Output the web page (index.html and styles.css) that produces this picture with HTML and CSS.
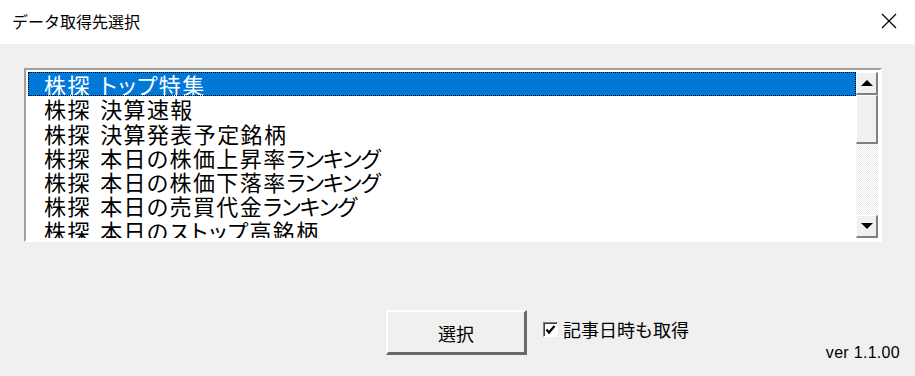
FILE: index.html
```html
<!DOCTYPE html>
<html lang="ja">
<head>
<meta charset="utf-8">
<title>データ取得先選択</title>
<link rel="stylesheet" href="styles.css">
</head>
<body>
<div class="window">
  <div class="titlebar">
    <span class="title">データ取得先選択</span>
    <svg class="close" width="16" height="16" viewBox="0 0 16 16"><path d="M1 1 L15 15 M15 1 L1 15" stroke="#000" stroke-width="1.2" fill="none"/></svg>
  </div>
  <div class="content">
    <div class="listbox">
      <ul class="items">
        <li class="item selected">株探 トップ特集</li>
        <li class="item">株探 決算速報</li>
        <li class="item">株探 決算発表予定銘柄</li>
        <li class="item">株探 本日の株価上昇率<span class="kana">ランキング</span></li>
        <li class="item">株探 本日の株価下落率<span class="kana">ランキング</span></li>
        <li class="item">株探 本日の売買代金<span class="kana">ランキング</span></li>
        <li class="item">株探 本日のストップ高銘柄</li>
      </ul>
      <div class="scrollbar">
        <div class="sbtn"><span class="tri up"></span></div>
        <div class="thumb"></div>
        <div class="track"></div>
        <div class="sbtn"><span class="tri down"></span></div>
      </div>
    </div>
    <div class="actions">
      <button class="btn">選択</button>
      <label class="check"><span class="box"><svg width="11" height="11" viewBox="0 0 11 11"><path d="M1.5 5.5 L4 8.5 L9.5 2" stroke="#000" stroke-width="2.2" fill="none"/></svg></span>記事日時も取得</label>
      <span class="ver">ver 1.1.00</span>
    </div>
  </div>
</div>
</body>
</html>
```
FILE: styles.css
```css
html, body {
  margin: 0;
  padding: 0;
  background: #f0f0f0;
}
.window {
  width: 915px;
  height: 376px;
  overflow: hidden;
  font-family: "Noto Sans CJK JP", "Noto Sans", sans-serif;
}
.titlebar {
  height: 44px;
  background: #fff;
  display: flex;
  align-items: center;
  justify-content: space-between;
  padding: 0 18px 0 12px;
  box-sizing: border-box;
}
.title {
  font-size: 16px;
  color: #000;
  margin-top: -2px;
}
.close {
  margin-top: -3px;
}
.content {
  padding: 24px 0 0 24px;
}
.listbox {
  width: 858px;
  height: 174px;
  box-sizing: border-box;
  border: 2px solid;
  border-color: #a0a0a0 #fff #fff #a0a0a0;
  background: #fff;
  padding: 2px;
  display: flex;
  overflow: hidden;
}
.items {
  list-style: none;
  margin: 0;
  padding: 0;
  flex: 1;
  overflow: hidden;
}
.item {
  height: 24.3px;
  line-height: 24px;
  padding-left: 16px;
  font-size: 22px;
  letter-spacing: 1.4px;
  word-spacing: 3px;
  font-feature-settings: "palt" 1;
  color: #000;
  white-space: nowrap;
  box-sizing: border-box;
}
.kana {
  letter-spacing: -1px;
}
.item.selected {
  background: #0078d7;
  color: #fff;
  outline: 1px dotted #000;
  outline-offset: -1px;
}
.scrollbar {
  width: 22px;
  display: flex;
  flex-direction: column;
  background: repeating-conic-gradient(#fff 0 25%, #ececec 0 50%) 0 0 / 2px 2px;
}
.sbtn, .thumb {
  box-sizing: border-box;
  background: #f0f0f0;
  border-style: solid;
  border-width: 1px 2px 2px 1px;
  border-color: #fff #808080 #808080 #fff;
  display: flex;
  align-items: center;
  justify-content: center;
}
.sbtn {
  height: 23px;
}
.thumb {
  height: 49px;
}
.track {
  flex: 1;
}
.tri {
  width: 0;
  height: 0;
  border-left: 6px solid transparent;
  border-right: 6px solid transparent;
}
.tri.up {
  border-bottom: 6px solid #000;
}
.tri.down {
  border-top: 6px solid #000;
}
.actions {
  display: flex;
  align-items: flex-start;
  margin-top: 68px;
  padding-left: 362px;
  padding-right: 15px;
}
.btn {
  width: 141px;
  height: 45px;
  box-sizing: border-box;
  background: #f0f0f0;
  border-style: solid;
  border-width: 2px 3px 3px 2px;
  border-color: #fff #696969 #696969 #fff;
  font-family: "Noto Sans CJK JP", sans-serif;
  font-size: 18px;
  color: #000;
  padding: 0;
  padding-top: 2px;
}
.check {
  display: flex;
  align-items: center;
  margin-left: 16px;
  margin-top: 6px;
  font-size: 18px;
  color: #000;
}
.box {
  width: 15px;
  height: 15px;
  box-sizing: border-box;
  border: 1px solid;
  border-color: #808080 #fff #fff #808080;
  box-shadow: inset 1px 1px #404040;
  background: #fff;
  display: flex;
  align-items: center;
  justify-content: center;
  margin-right: 5px;
}
.ver {
  margin-left: auto;
  margin-top: 34px;
  font-family: "Liberation Sans", Arial, sans-serif;
  font-size: 16px;
  color: #000;
  letter-spacing: 0.3px;
}
```
